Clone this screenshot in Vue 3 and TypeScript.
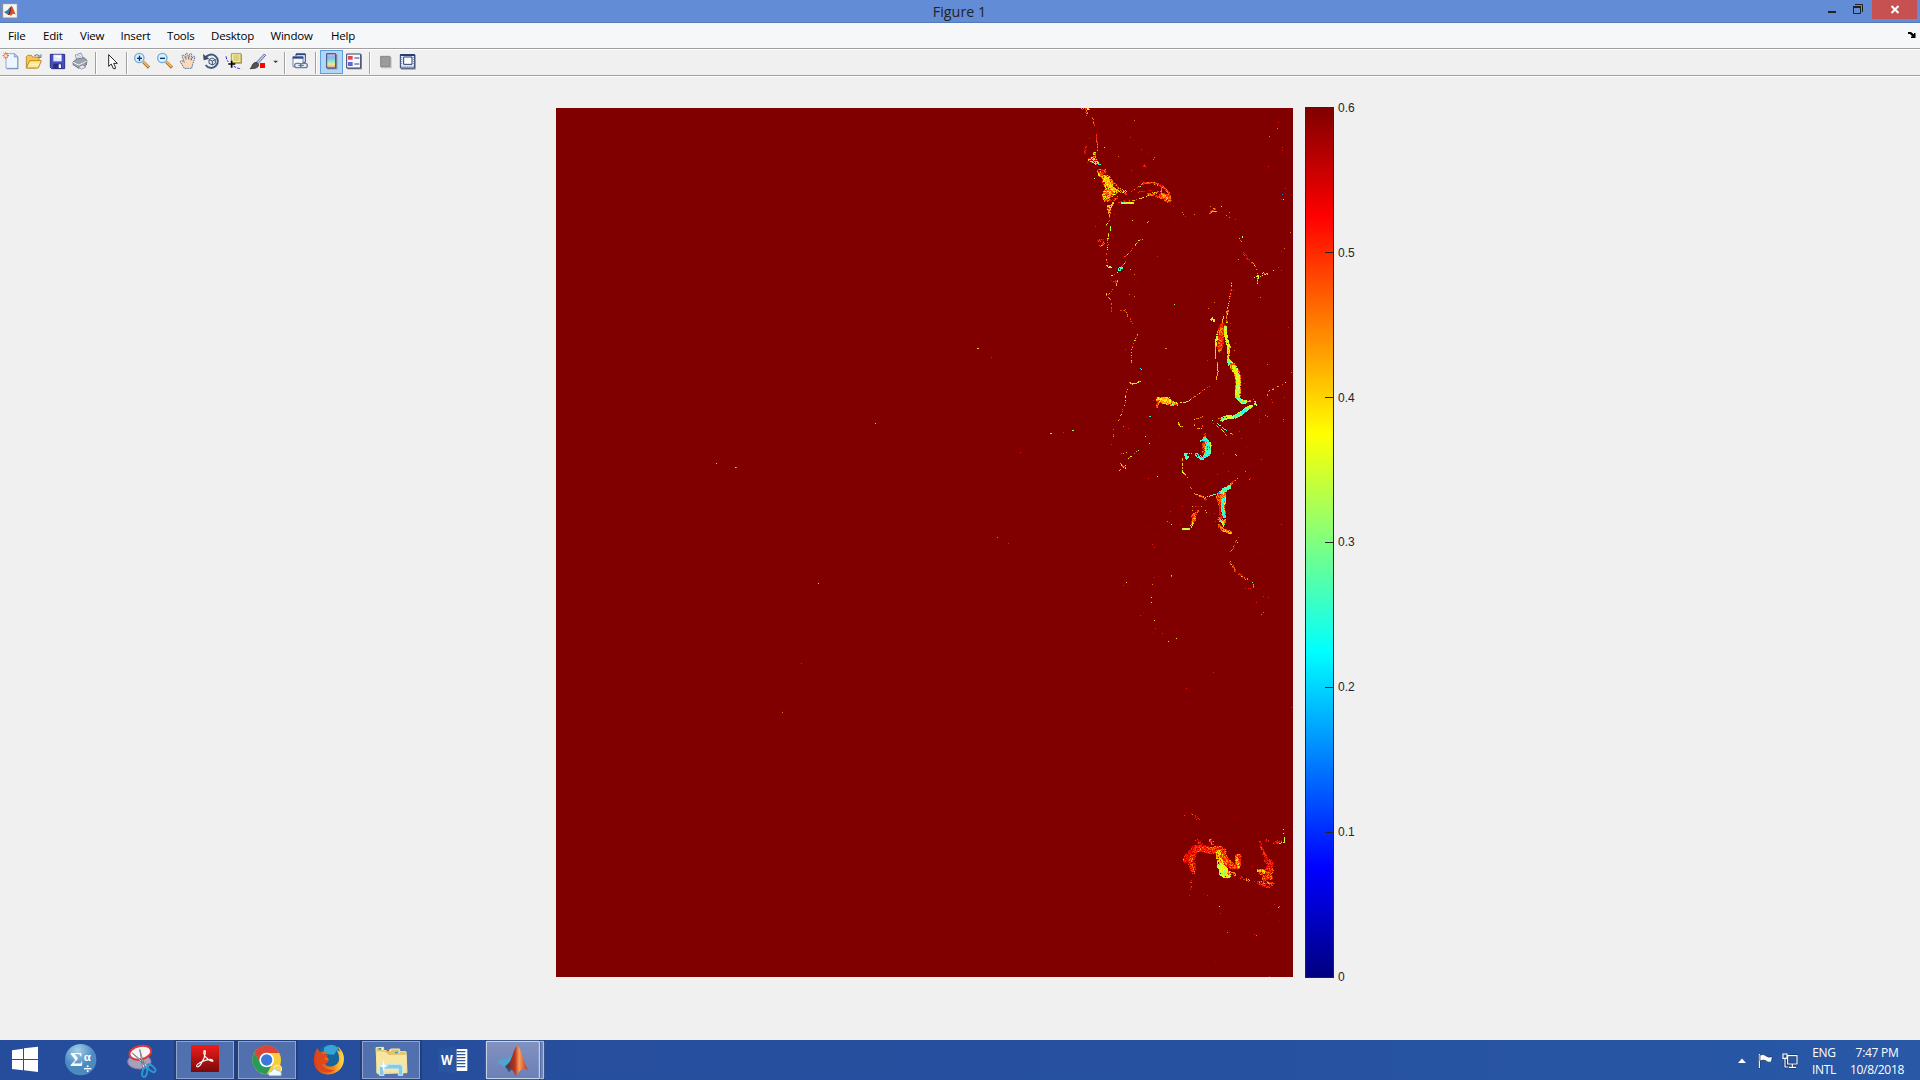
<script setup lang="ts">
type Palette = 'red' | 'orange' | 'mixed' | 'yellow' | 'lime' | 'jade' | 'aqua'
// palette, width in cells, fill density, then x/y pairs on a third-of-a-cell grid
type Stroke = [Palette, number, number, number[]]
interface Region { x: number; y: number; strokes: Stroke[]; specks: string }

const palettes: Record<Palette, string[]> = {
  red: ['#c80000', '#f01000', '#ff2000', '#ff3800', '#e00000'],
  orange: ['#ff3000', '#ff5000', '#ff7800', '#ff2000', '#e81000', '#ffa000'],
  mixed: ['#ff3000', '#ff9000', '#ffc000', '#f8ff08', '#ff6000', '#ff4800'],
  yellow: ['#ffc000', '#ffe000', '#ffa000', '#f0ff10', '#ffe800', '#ff8800'],
  lime: ['#c8ff38', '#d8ff28', '#98ff68', '#f0ff10', '#ffe000', '#b0ff50'],
  jade: ['#60ffa0', '#40ffc0', '#90ff70', '#50ffb0', '#30ffd0'],
  aqua: ['#20ffe0', '#00f0ff', '#40ffc0', '#60ffa0', '#10e8f8', '#50ffb0'],
}

const speckColors: Record<string, string> = {
  d: '#b80000', r: '#f01800', o: '#ff7000', y: '#ffe000', g: '#90ff70', c: '#10f0f0', b: '#0080ff',
}

const regions: Region[] = [
  {
    x: 1060, y: 100,
    strokes: [
      ['mixed', 2, 0.6, [64, 25, 84, 25]], ['aqua', 1, 0.7, [58, 25, 72, 25]], ['orange', 2, 0.6, [76, 30, 80, 42]],
      ['orange', 1, 0.45, [98, 52, 103, 76]], ['orange', 1, 0.85, [110, 104, 112, 150]],
      ['red', 2, 0.6, [78, 136, 72, 158]], ['mixed', 3, 0.7, [104, 160, 102, 176]],
      ['lime', 5, 0.6, [90, 178, 108, 186]], ['aqua', 1, 0.7, [98, 178, 108, 190, 120, 194]],
      ['orange', 5, 0.5, [118, 215, 134, 214]], ['mixed', 4, 0.8, [118, 222, 136, 234, 150, 250]],
      ['mixed', 9, 0.7, [138, 238, 150, 262, 142, 284]], ['yellow', 5, 0.9, [136, 236, 150, 258, 160, 270]],
      ['mixed', 8, 0.7, [136, 288, 160, 274]], ['orange', 2, 0.55, [152, 238, 176, 262, 196, 280]],
      ['yellow', 3, 0.65, [158, 268, 180, 275, 196, 274]], ['orange', 2, 0.6, [130, 302, 160, 298, 176, 288]],
      ['orange', 1, 0.75, [196, 276, 212, 276, 230, 266, 246, 250, 272, 246, 300, 253]],
      ['orange', 2, 0.9, [248, 249, 282, 248, 304, 256, 322, 273, 328, 290]],
      ['orange', 4, 0.85, [300, 286, 318, 286, 328, 302]], ['orange', 6, 0.9, [308, 287, 318, 291, 322, 298]], ['yellow', 3, 0.5, [308, 287, 318, 291, 322, 298]],
      ['orange', 2, 0.85, [262, 281, 288, 286, 304, 292]], ['mixed', 2, 0.65, [270, 276, 288, 276, 302, 272]],
      ['mixed', 1, 0.9, [304, 260, 304, 280]], ['red', 1, 0.7, [236, 276, 272, 270]],
      ['red', 2, 0.6, [174, 305, 210, 299]], ['lime', 2, 1, [184, 306, 216, 306]],
      ['jade', 1, 0.7, [187, 307, 206, 310]], ['mixed', 1, 0.55, [216, 303, 232, 298, 260, 288, 274, 284]],
      ['yellow', 2, 0.75, [158, 308, 146, 328]], ['mixed', 4, 0.7, [146, 320, 148, 336]],
      ['mixed', 1, 0.7, [150, 340, 149, 360, 138, 375]], ['lime', 1, 0.8, [152, 378, 152, 392]], ['yellow', 1, 0.8, [145, 400, 144, 416]],
      ['mixed', 1, 0.5, [142, 410, 144, 434, 138, 468, 142, 490]], ['lime', 2, 0.5, [138, 496, 152, 500]],
      ['red', 3, 0.45, [116, 422, 130, 420]], ['mixed', 2, 0.5, [118, 436, 130, 428]],
      ['mixed', 1, 0.8, [246, 418, 234, 421, 224, 440, 206, 460, 190, 472]],
      ['mixed', 1, 0.7, [200, 482, 180, 506, 168, 524, 154, 526]], ['jade', 3, 0.7, [179, 507, 183, 505]],
      ['aqua', 1, 0.9, [172, 542, 170, 556]], ['mixed', 1, 0.6, [172, 550, 154, 574, 142, 586, 150, 598]],
      ['red', 2, 0.3, [154, 538, 170, 544]], ['red', 2, 0.35, [248, 190, 258, 200]],
      ['orange', 2, 0.75, [448, 336, 462, 324]], ['yellow', 1, 1, [456, 333, 470, 334]],
      ['mixed', 1, 0.45, [530, 398, 545, 428]], ['red', 2, 0.6, [546, 455, 558, 470, 574, 486]],
      ['mixed', 1, 0.75, [576, 486, 586, 500, 592, 524, 594, 552]], ['lime', 3, 0.35, [586, 532, 600, 530]],
      ['mixed', 2, 0.4, [604, 522, 618, 520]], ['mixed', 1, 0.4, [514, 544, 514, 570, 508, 600]],
    ],
    specks: '223,61,o 88,115,r 132,142,y 82,186,r 103,235,g 102,241,d 211,112,r 220,121,d 244,148,r 264,157,d 279,178,o 283,172,o 249,198,r 255,200,r 295,216,d 215,211,r 202,73,d 175,169,o 655,67,r 652,85,o 628,110,o 667,143,r 667,151,r 625,199,r 676,265,r 668,283,b 664,298,r 670,298,g 691,397,o 673,445,o 664,454,r 535,478,c 547,410,g 547,413,y 292,469,r 211,508,c 223,523,o 232,544,d 217,361,y 265,364,o 262,367,y 343,364,d 367,337,o 370,344,o 376,349,r 404,344,o 450,320,o 483,320,y 500,346,o 508,337,o 508,352,o 526,359,r 550,486,d 523,514,d 610,517,g 640,511,y 655,503,r 664,510,r 601,592,y 209,583,o 222,590,r 391,580,d 114,349,d 121,358,d 106,379,r 164,344,r 340,320,r 332,312,d 242,260,g',
  },
  {
    x: 1060, y: 290,
    strokes: [
      ['mixed', 3, 0.35, [142, 14, 152, 12]], ['mixed', 1, 0.4, [156, 38, 153, 72]], ['orange', 2, 0.3, [174, 60, 192, 58, 214, 98]],
      ['mixed', 1, 0.5, [234, 130, 225, 150, 214, 178, 213, 222]], ['yellow', 1, 1, [208, 277, 216, 282, 230, 279, 240, 273]], ['lime', 1, 0.6, [210, 280, 226, 281, 238, 274]],
      ['mixed', 1, 0.5, [205, 292, 196, 314, 196, 338, 184, 370, 176, 392]], ['mixed', 1, 0.55, [162, 410, 160, 438]],
      ['mixed', 1, 0.35, [232, 483, 206, 506, 194, 530, 180, 542]], ['mixed', 1, 0.35, [180, 492, 204, 484]], ['mixed', 2, 0.4, [180, 520, 192, 532]],
      ['yellow', 1, 0.65, [508, 12, 507, 38, 501, 64]], ['mixed', 2, 0.65, [501, 62, 498, 96]],
      ['yellow', 1, 0.8, [492, 76, 486, 100, 474, 120, 468, 150, 466, 204]],
      ['red', 7, 0.8, [487, 108, 482, 140, 479, 170]], ['orange', 4, 0.8, [484, 114, 479, 150, 479, 180]],
      ['lime', 3, 0.95, [495, 112, 498, 140, 504, 166, 506, 188]], ['yellow', 2, 0.8, [507, 170, 506, 186, 501, 204]],
      ['lime', 2, 0.7, [470, 132, 466, 164]], ['yellow', 1, 0.95, [472, 218, 474, 245, 468, 268]],
      ['mixed', 1, 0.65, [460, 282, 430, 300, 406, 318, 382, 335]], ['lime', 1, 0.6, [382, 335, 356, 340]],
      ['yellow', 6, 0.85, [296, 329, 322, 329]], ['yellow', 7, 1, [310, 330, 322, 333]], ['yellow', 3, 0.85, [320, 332, 346, 340]], ['mixed', 3, 0.8, [320, 338, 350, 342]],
      ['aqua', 2, 0.5, [332, 344, 349, 340]], ['orange', 2, 0.7, [294, 332, 288, 350]],
      ['lime', 4, 1, [506, 212, 516, 226, 524, 235]], ['jade', 3, 0.8, [505, 214, 509, 222]],
      ['mixed', 6, 0.9, [517, 226, 530, 246, 533, 270, 532, 316]], ['lime', 4, 1, [520, 230, 531, 256, 532, 290, 530, 320]],
      ['lime', 4, 1, [529, 316, 540, 332, 556, 335]], ['jade', 3, 0.6, [530, 320, 541, 330, 552, 334]], ['lime', 1, 0.8, [552, 334, 570, 334]],
      ['mixed', 1, 0.7, [562, 334, 580, 328]], ['lime', 2, 0.7, [584, 334, 585, 344]], ['lime', 1, 0.9, [584, 344, 570, 347]],
      ['lime', 4, 0.95, [572, 348, 548, 366, 526, 378, 502, 380, 486, 387]], ['jade', 4, 0.9, [562, 354, 544, 370, 526, 378]], ['aqua', 2, 0.5, [554, 360, 530, 376]],
      ['jade', 3, 0.8, [484, 387, 494, 386]], ['mixed', 1, 0.7, [472, 386, 484, 384]],
      ['jade', 1, 0.75, [472, 400, 486, 413, 498, 421]], ['mixed', 1, 0.6, [460, 400, 478, 414, 492, 426, 500, 440]],
      ['mixed', 1, 0.55, [428, 402, 425, 415, 410, 414, 402, 403]], ['mixed', 1, 0.5, [404, 388, 426, 380]],
      ['mixed', 2, 0.35, [354, 398, 364, 410]], ['orange', 2, 0.5, [433, 428, 434, 442]],
      ['aqua', 4, 0.95, [432, 444, 442, 457]], ['orange', 5, 0.75, [434, 460, 444, 480]], ['aqua', 2, 0.9, [420, 452, 434, 446]],
      ['aqua', 6, 0.95, [444, 466, 441, 490]], ['orange', 3, 0.7, [432, 462, 430, 486]], ['lime', 1, 0.9, [451, 458, 452, 490]],
      ['aqua', 4, 0.95, [444, 486, 434, 500]], ['aqua', 3, 0.9, [426, 506, 410, 494]], ['lime', 1, 0.6, [374, 490, 406, 492]],
      ['jade', 4, 0.8, [377, 493, 380, 502]], ['yellow', 1, 0.6, [368, 506, 367, 542, 382, 562]], ['lime', 3, 0.5, [454, 86, 460, 90]],
      ['mixed', 1, 0.35, [620, 318, 628, 302, 650, 292, 678, 276]], ['red', 1, 0.5, [634, 320, 638, 342]],
      ['orange', 2, 0.6, [500, 590, 518, 574]], ['jade', 3, 1, [490, 598, 508, 592]],
      ['mixed', 1, 0.4, [510, 430, 524, 432]],
    ],
    specks: '343,43,g 391,10,d 208,13,o 222,19,o 601,22,o 462,37,o 445,55,o 511,2,r 520,2,r 684,112,r 643,133,d 511,101,r 511,121,d 525,161,r 523,180,o 316,175,o 319,175,o 196,178,r 242,236,c 244,239,g 241,257,d 442,211,r 328,268,r 622,223,o 694,247,o 553,280,r 280,331,r 268,379,c 271,379,c 37,421,g 40,421,g 10,427,y 205,415,r 190,410,o 154,463,r 256,439,g 268,460,g 292,559,y 265,565,r 298,439,d 234,481,g 545,445,r 558,471,d 490,490,r 528,496,y 526,494,g 604,508,r 556,544,r 568,569,r 571,566,r 452,577,d 392,593,r 672,322,r 617,376,o 622,379,o 598,388,r 598,398,r 670,388,o 670,394,r 457,391,g 518,433,o 538,425,r',
  },
  {
    x: 1100, y: 470,
    strokes: [
      ['lime', 2, 0.65, [244, 2, 250, 8]], ['mixed', 1, 0.65, [254, 12, 264, 24]], ['orange', 1, 0.7, [270, 52, 275, 56]],
      ['orange', 2, 0.65, [282, 71, 302, 76, 316, 84]], ['yellow', 1, 0.5, [290, 74, 310, 80]], ['lime', 1, 0.8, [316, 82, 334, 76, 354, 72]], ['jade', 3, 0.95, [360, 68, 375, 60, 389, 50]],
      ['aqua', 1, 0.9, [342, 74, 364, 69]], ['orange', 1, 0.65, [385, 48, 397, 36, 411, 26]],
      ['orange', 5, 0.8, [356, 80, 362, 100]], ['yellow', 3, 0.8, [374, 70, 366, 84]], ['mixed', 6, 0.75, [368, 80, 368, 100]],
      ['aqua', 3, 1, [369, 88, 367, 114, 372, 140]], ['mixed', 1, 0.8, [376, 70, 374, 112, 377, 140]], ['red', 2, 0.75, [358, 98, 358, 126, 366, 144]],
      ['mixed', 3, 0.8, [357, 146, 370, 156, 374, 150]], ['jade', 2, 0.9, [358, 150, 370, 160]], ['lime', 1, 1, [367, 158, 370, 170]],
      ['orange', 3, 0.85, [357, 165, 370, 180, 390, 188]], ['yellow', 2, 0.95, [370, 181, 380, 184, 392, 188]],
      ['orange', 2, 0.8, [292, 120, 280, 132, 274, 136]], ['orange', 4, 0.75, [282, 134, 278, 156]], ['yellow', 2, 0.5, [284, 136, 278, 156]], ['yellow', 2, 0.8, [276, 160, 268, 172]],
      ['lime', 2, 1, [248, 174, 266, 174]], ['orange', 1, 0.7, [272, 126, 278, 120]], ['orange', 1, 0.4, [274, 108, 308, 108]],
      ['orange', 1, 0.65, [410, 210, 399, 235, 386, 250]], ['orange', 2, 0.55, [388, 274, 398, 290, 404, 302]], ['yellow', 1, 0.3, [390, 274, 398, 292]],
      ['orange', 2, 0.5, [414, 311, 426, 318, 438, 326]], ['yellow', 1, 0.65, [422, 319, 432, 322]],
      ['orange', 1, 0.45, [458, 338, 462, 354, 458, 374]], ['red', 2, 0.3, [312, 86, 322, 98]],
    ],
    specks: '58,2,y 145,25,r 172,19,g 332,37,d 352,13,r 385,4,r 436,4,o 448,28,o 451,25,r 248,109,r 316,122,y 319,127,y 343,130,r 205,130,d 210,124,r 202,154,o 207,157,r 214,162,g 241,163,r 163,195,d 148,172,d 439,160,d 544,163,r 508,205,d 484,247,d 158,223,r 163,232,r 175,320,d 163,322,r 157,343,o 214,316,y 214,319,o 79,337,y 70,346,r 122,348,d 154,382,y 154,397,y 130,427,d 121,436,r 163,451,y 166,475,r 187,475,d 187,490,r 160,487,d 229,481,d 229,505,y 205,514,y 436,355,r 445,355,r 451,355,r 458,337,g 490,379,r 505,382,r 469,397,r 490,427,o 484,433,o 415,202,r 389,262,d 346,154,r 352,148,r 412,217,y 355,68,b 358,67,b 355,71,b',
  },
  {
    x: 1160, y: 800,
    strokes: [
      ['red', 5, 0.75, [76, 180, 82, 166, 98, 152]], ['red', 7, 0.85, [102, 144, 124, 144, 150, 152]], ['orange', 5, 0.55, [108, 148, 130, 148, 150, 152, 174, 154]],
      ['red', 7, 0.75, [100, 156, 95, 178, 97, 204]], ['orange', 3, 0.4, [94, 160, 92, 194, 101, 218]],
      ['orange', 6, 0.75, [158, 148, 178, 146, 190, 154]], ['orange', 7, 0.8, [178, 158, 190, 178, 194, 196]],
      ['yellow', 7, 0.85, [178, 160, 182, 185, 184, 205]], ['orange', 6, 0.85, [190, 164, 202, 186, 216, 200]],
      ['lime', 7, 0.9, [182, 200, 192, 208, 194, 218]], ['lime', 8, 0.85, [186, 218, 202, 222]],
      ['orange', 4, 0.6, [204, 218, 222, 222]], ['orange', 6, 0.85, [234, 170, 232, 200]], ['yellow', 2, 0.6, [230, 172, 232, 198]],
      ['orange', 2, 0.6, [240, 230, 266, 240]], ['lime', 1, 0.4, [262, 236, 268, 240]], ['red', 1, 0.3, [272, 240, 298, 252]],
      ['red', 2, 0.8, [299, 124, 304, 144, 318, 172]], ['red', 3, 0.5, [302, 140, 316, 168]], ['red', 5, 0.75, [320, 182, 334, 190, 324, 204]],
      ['orange', 6, 0.65, [302, 213, 322, 219, 332, 210]], ['yellow', 3, 0.4, [296, 210, 312, 216]], ['orange', 5, 0.7, [312, 234, 332, 232]],
      ['red', 4, 0.65, [296, 246, 336, 250]], ['orange', 2, 0.6, [294, 244, 330, 250]], ['red', 2, 0.65, [308, 256, 332, 261]],
      ['red', 3, 0.55, [344, 128, 360, 124]], ['lime', 1, 0.85, [358, 130, 372, 126, 374, 112]], ['lime', 1, 0.4, [371, 88, 370, 110]],
      ['red', 2, 0.4, [314, 118, 324, 122]], ['red', 2, 0.25, [72, 52, 80, 36]], ['red', 3, 0.25, [110, 48, 116, 62]],
      ['red', 2, 0.25, [92, 240, 88, 282]], ['orange', 3, 0.5, [150, 118, 158, 130]], ['red', 3, 0.4, [110, 122, 124, 130]],
    ],
    specks: '94,41,r 97,43,o 223,49,d 385,79,d 71,178,g 259,184,d 277,199,r 142,286,r 130,283,d 148,295,d 178,319,g 181,340,r 202,397,o 283,404,r 289,406,o 343,313,r 355,322,y 358,319,o 322,337,d 358,361,d 376,391,d 328,529,r 167,484,d 334,320,d',
  },
  {
    x: 0, y: 0, strokes: [],
    specks: '2931,1044,g 2934,1044,y 2973,1071,r 2625,1269,g 2148,1389,g 2208,1401,o 2205,1401,y 3153,1299,g 3150,1299,g 3189,1296,r 3219,1290,g 3060,1356,r 2991,1611,o 3024,1629,r 2454,1749,y 2403,1989,r 2346,2136,o 3639,2016,r 3558,2064,r 3873,2121,r',
  },
]

function makeRandom(seed: number): () => number {
  let s = seed
  return () => {
    s = (s * 1664525 + 1013904223) >>> 0
    return s / 4294967296
  }
}

function rasterise(): { color: string; d: string }[] {
  const cells = new Map<string, string>()
  const random = makeRandom(4127)
  for (const region of regions) {
    for (const [name, width, density, pts] of region.strokes) {
      const visited = new Set<string>()
      const colors = palettes[name]
      for (let i = 0; i + 3 < pts.length; i += 2) {
        const x0 = pts[i] / 3, y0 = pts[i + 1] / 3
        const dx = pts[i + 2] / 3 - x0, dy = pts[i + 3] / 3 - y0
        const steps = Math.max(1, Math.ceil(Math.max(Math.abs(dx), Math.abs(dy))))
        for (let k = 0; k <= steps; k++) {
          const cx = x0 + (dx * k) / steps, cy = y0 + (dy * k) / steps
          const lo = -Math.floor((width - 1) / 2), hi = Math.floor(width / 2)
          for (let a = lo; a <= hi; a++) {
            for (let b = lo; b <= hi; b++) {
              if (width > 3 && a * a + b * b > (width * width) / 4 + 0.5) continue
              const key = `${region.x + Math.floor(cx) + a},${region.y + Math.floor(cy) + b}`
              if (visited.has(key)) continue
              visited.add(key)
              if (random() < density) cells.set(key, colors[Math.floor(random() * colors.length)])
              else if (width > 4 && !cells.has(key) && random() < 0.6) cells.set(key, '#d80800')
            }
          }
        }
      }
    }
    for (const speck of region.specks.split(' ')) {
      const [x, y, c] = speck.split(',')
      cells.set(`${region.x + Math.floor(+x / 3)},${region.y + Math.floor(+y / 3)}`, speckColors[c])
    }
  }
  const byColor = new Map<string, string>()
  cells.forEach((color, key) => {
    byColor.set(color, (byColor.get(color) ?? '') + `M${key.replace(',', ' ')}h1v1h-1z`)
  })
  return Array.from(byColor, ([color, d]) => ({ color, d }))
}

const layers = rasterise()
const menus = [
  { label: 'File', width: 35 }, { label: 'Edit', width: 37 }, { label: 'View', width: 40.5 }, { label: 'Insert', width: 46.5 },
  { label: 'Tools', width: 44 }, { label: 'Desktop', width: 59.500 }, { label: 'Window', width: 60.500 }, { label: 'Help', width: 40 },
]
const ticks = ['0.6', '0.5', '0.4', '0.3', '0.2', '0.1', '0']
</script>

<template>
  <div class="screen">
    <header class="titlebar">
      <svg class="app-icon" viewBox="0 0 48 48">
        <path d="M2 2h44v43H2z" fill="#f5f5f5" stroke="#8d8d8d" stroke-width="3" />
        <path d="M6 27l10-5 9-11-3 20-7 3z" fill="#397aa5" />
        <path d="M16 35c7-2 8-26 12-26 5 0 8 17 14 26-7-5-10-3-15 4-3-5-6-4-11-4z" fill="#d35425" />
        <path d="M16 35c7-2 8-26 11-24 0 8-1 19-5 24z" fill="#6b1f24" />
      </svg>
      <span class="title">Figure 1</span>
      <div class="controls">
        <svg class="min" viewBox="0 0 26 20"><path d="M10 11h8v2h-8z" fill="#222" /></svg>
        <svg class="max" viewBox="0 0 28 20"><path d="M9.500 7h7v6.500h-7zM11 4.500h7.500V12" fill="none" stroke="#222" /><path d="M9 6h8v2H9z" fill="#222" /></svg>
        <svg class="close" viewBox="0 0 45 19"><path d="M19.500 6l7 7m0-7l-7 7" stroke="#fff" stroke-width="2" /></svg>
      </div>
    </header>

    <nav class="menubar">
      <span v-for="m in menus" :key="m.label" :style="{ width: m.width + 'px' }">{{ m.label }}</span>
      <svg class="dock" viewBox="0 0 8 6"><path d="M0 0h3l3 2.500V1h1.500v5H3V4.500h1.500L2 2H0z" fill="#000" /></svg>
    </nav>

    <div class="toolbar">
      <svg class="tool" viewBox="0 150 69 72">
        <path d="M21 163h26l8 8v37H21z" fill="#7792b5" /><path d="M18 161h26l9 9v35H18z" fill="#edf5ff" stroke="#6587b7" stroke-width="2" />
        <path d="M43 161v10h10" fill="#b9cfeb" stroke="#6587b7" stroke-width="2" />
        <path d="M17 157v19M8 167h19M11 160l13 13M24 160l-13 13" stroke="#e05425" stroke-width="3" /><circle cx="17" cy="167" r="4" fill="#fff1a4" />
      </svg>
      <svg class="tool" viewBox="0 150 69 72">
        <path d="M10 204v-34l4-4h11l4 5h19v8l-7 25z" fill="#f4c84d" stroke="#a86b12" stroke-width="2" />
        <path d="M10 204l10-22h35l-9 22z" fill="#ffe98b" stroke="#c28822" stroke-width="3" /><path d="M18 193h30" stroke="#fff5c1" stroke-width="4" />
        <path d="M34 167q9-7 17 2m3-6v9h-9" fill="none" stroke="#55749c" stroke-width="3" />
      </svg>
      <svg class="tool" viewBox="0 150 69 72">
        <path d="M13 163h43v43H17l-4-4z" fill="#474fc0" stroke="#26318d" stroke-width="3" /><path d="M22 164h25v20H22z" fill="#dfeafa" />
        <path d="M24 167h20v9z" fill="#fff" /><path d="M22 191h25v15H22z" fill="#272d7c" /><path d="M38 193h7v11h-7z" fill="#f4f4fa" />
      </svg>
      <svg class="tool" viewBox="0 150 69 72">
        <path d="M24 183l-5-18 17-6 8 18z" fill="#f5faff" stroke="#68727e" stroke-width="2" /><path d="M23 168l12-4m-10 9l12-4" stroke="#7ba0d1" stroke-width="2" />
        <path d="M12 186l11-9 22-4 9 8-2 14-23 10-17-11z" fill="#9da2ac" stroke="#50555f" stroke-width="2" /><path d="M12 187l17 8 24-11" fill="none" stroke="#f3f3f3" stroke-width="3" />
        <path d="M27 201l14-6 10 6-13 6z" fill="#e9ebef" stroke="#6f747d" stroke-width="2" /><circle cx="49" cy="189" r="2" fill="#54a450" />
      </svg>
      <i class="sep"></i>
      <svg class="tool" viewBox="0 150 69 72"><path d="M26 164v35l8-7 6 14h6v-5l-5-11h11z" fill="#fff" stroke="#000" stroke-width="2.500" /></svg>
      <i class="sep"></i>
      <svg v-for="sign in ['plus', 'minus']" :key="sign" class="tool" viewBox="0 150 69 72">
        <path d="M37 186l17 17" stroke="#8b632f" stroke-width="9" /><path d="M37 185l16 16" stroke="#f4b348" stroke-width="6" />
        <circle cx="25" cy="174" r="14" fill="#d5f3fc" stroke="#77a9cf" stroke-width="4" />
        <path d="M18 175h15" stroke="#142d7b" stroke-width="4" /><path v-if="sign === 'plus'" d="M25.500 167v16" stroke="#142d7b" stroke-width="4" />
      </svg>
      <svg class="tool" viewBox="0 150 69 72">
        <path d="M22 205l-12-19q0-5 5-4l7 5-7-19q1-5 6-2l6 12-1-16q3-5 6 0l3 16 3-16q4-4 6 1l-2 18 6-12q5-2 6 2l-7 22-3 12z" fill="#ffdab8" stroke="#375d9c" stroke-width="2.500" stroke-dasharray="5 2" />
      </svg>
      <svg class="tool" viewBox="0 150 69 72">
        <path d="M16 174a20 20 0 1 1 1 21" fill="none" stroke="#435a80" stroke-width="6" /><path d="M9 162l2 19 17-5z" fill="#34496c" />
        <path d="M27 179l9-5 10 5v11l-9 5-10-5zM27 179l10 4 9-4M37 183v12" fill="#e9effa" stroke="#405371" stroke-width="3" />
      </svg>
      <svg class="tool" viewBox="0 150 69 72">
        <path d="M27 163h30v28H27z" fill="#9a9a78" /><path d="M25 161h29v27H25z" fill="#f7ee98" stroke="#a49945" stroke-width="3" /><path d="M31 168h18m-18 6h18m-18 6h18" stroke="#a39a4d" stroke-width="2" />
        <path d="M9 169q2 11 7 17m16 12q10 8 23 8" fill="none" stroke="#1821eb" stroke-width="3" stroke-dasharray="8 4" /><path d="M26 182v21M16 192h21" stroke="#000" stroke-width="5" />
      </svg>
      <svg class="tool" viewBox="0 150 69 72">
        <path d="M30 188l25-26 4 4-25 27z" fill="#cbd7ff" stroke="#55609a" stroke-width="3" /><path d="M12 206q6-4 7-12 5-9 15-6l4 7q-1 12-26 11z" fill="#555" stroke="#222" stroke-width="2" /><path d="M42 189h15v15H42z" fill="red" />
      </svg>
      <svg class="caret" viewBox="0 150 36 72"><path d="M13 182h14l-7 7z" fill="#333" /></svg>
      <i class="sep"></i>
      <svg class="tool" viewBox="0 150 69 72">
        <path d="M21 162h28v25H21z" fill="#eef2fa" stroke="#2d4882" stroke-width="3" /><path d="M21 163h28" stroke="#2d4882" stroke-width="5" />
        <path d="M12 170h30v30H12z" fill="#f5f7fb" stroke="#6f84ad" stroke-width="3" /><path d="M11 173h32" stroke="#2d4882" stroke-width="6" />
        <g fill="#e7ecf5" stroke="#6c7e9f" stroke-width="4"><rect x="17" y="190" width="20" height="13" rx="6" /><rect x="35" y="190" width="20" height="13" rx="6" /></g><path d="M28 196h17" stroke="#52678f" stroke-width="3" />
      </svg>
      <i class="sep"></i>
      <svg class="tool selected" viewBox="0 150 69 72">
        <defs><linearGradient id="tool-map" x2="0" y2="1"><stop stop-color="#ccb0e0" /><stop offset=".3" stop-color="#8bb7f0" /><stop offset=".52" stop-color="#82eac9" /><stop offset=".74" stop-color="#f4e990" /><stop offset="1" stop-color="#ee9794" /></linearGradient></defs>
        <path d="M22 163h30v45H22z" fill="#82909f" /><path d="M20 161h27v43H20z" fill="url(#tool-map)" stroke="#314e88" stroke-width="3" />
      </svg>
      <svg class="tool" viewBox="0 150 69 72">
        <path d="M13 164h44v44H13z" fill="#8b8b8b" /><path d="M11 162h42v42H11z" fill="#f8f9ff" stroke="#314273" stroke-width="3" /><path d="M15 168h14v11H15z" fill="#e24848" /><path d="M15 186h14v12H15z" fill="#6464da" /><path d="M34 174h15m-15 18h15" stroke="#35406a" stroke-width="3" />
      </svg>
      <i class="sep"></i>
      <svg class="tool" viewBox="0 150 69 72"><path d="M21 171h32v34H21z" fill="#c7c7c7" /><path d="M20 169h28v31H20z" fill="#9b9b9b" stroke="#858585" stroke-width="3" /></svg>
      <svg class="tool" viewBox="0 150 69 72">
        <path d="M12 165h44v44H12z" fill="#969696" /><path d="M10 164h43v40H10z" fill="#e7edfa" stroke="#293d70" stroke-width="3" /><path d="M10 165h43" stroke="#293d70" stroke-width="6" /><path d="M20 171h25v22H20z" fill="#fff" stroke="#293d70" stroke-width="3" /><path d="M13 199h38M14 171v25m36-25v25" stroke="#7f8fad" stroke-width="3" stroke-dasharray="3 3" />
      </svg>
    </div>

    <main class="figure">
      <svg class="heatmap" viewBox="556 108 737 869" shape-rendering="crispEdges">
        <path v-for="l in layers" :key="l.color" :d="l.d" :fill="l.color" />
      </svg>
      <div class="colorbar"><i v-for="t in 5" :key="t"></i></div>
      <div class="labels"><span v-for="t in ticks" :key="t">{{ t }}</span></div>
    </main>

    <footer class="taskbar">
      <svg class="start" viewBox="0 12 150 120"><path d="M36 43l33-5v31H36zM72 37l42-5v37H72zM36 72h33v31l-33-4zM72 72h42v36l-42-5z" fill="#fff" /></svg>
      <svg class="task" viewBox="0 12 186 120">
        <defs><radialGradient id="sigma" cx=".4" cy=".2"><stop stop-color="#a6cee8" /><stop offset="1" stop-color="#4b8bc0" /></radialGradient></defs>
        <circle cx="92" cy="71" r="47" fill="url(#sigma)" /><text x="60" y="91" font-family="Liberation Serif, serif" font-weight="bold" font-size="59" fill="#fff">Σ</text><text x="101" y="76" font-family="Liberation Serif, serif" font-weight="bold" font-size="38" fill="#fff">α</text><path d="M102 98h22" stroke="#fff" stroke-width="4" /><circle cx="113" cy="91" r="3" fill="#fff" /><circle cx="113" cy="105" r="3" fill="#fff" />
      </svg>
      <svg class="task" viewBox="0 12 186 120">
        <ellipse cx="82" cy="77" rx="35" ry="22" fill="#a4a1bf" stroke="#8b7ca9" stroke-width="3" /><ellipse cx="85" cy="50" rx="33" ry="20" transform="rotate(-13 85 50)" fill="#f7f4f5" stroke="#dd353c" stroke-width="6" />
        <path d="M61 51l45 46 5-5zM83 40l16 53-7 2z" fill="#d9e0e7" stroke="#5a5f69" stroke-width="2" /><g fill="none" stroke="#2998d6" stroke-width="6"><ellipse cx="98" cy="109" rx="7" ry="14" transform="rotate(13 98 109)" /><ellipse cx="118" cy="97" rx="15" ry="7" transform="rotate(42 118 97)" /></g>
      </svg>
      <svg class="task open" viewBox="0 12 186 120">
        <defs><linearGradient id="acro" x2="0" y2="1"><stop stop-color="#f21b18" /><stop offset="1" stop-color="#790a0c" /></linearGradient></defs>
        <path d="M51 27h84v81H51z" fill="url(#acro)" /><path d="M68 91c-5-8 40-27 48-18 7 10-32-8-26-28 7-7 5 17-8 37-5 8-10 13-14 9z" fill="none" stroke="#fff" stroke-width="3.500" />
      </svg>
      <svg class="task open" viewBox="0 12 186 120">
        <circle cx="92" cy="72" r="43" fill="#f7cd3a" /><path d="M55 50a43 43 0 0 1 75 1H92a22 22 0 0 0-20 29z" fill="#db4538" /><path d="M55 50a43 43 0 0 0 37 65l17-32a22 22 0 0 1-35-2z" fill="#279b57" /><circle cx="92" cy="72" r="22" fill="#fff" /><circle cx="92" cy="72" r="17" fill="#3b78dc" />
        <circle cx="125" cy="99" r="12" fill="#ffd34f" stroke="#fff4bf" stroke-width="3" /><path d="M100 119q-7-10 7-13 7-15 17-2 15-1 11 15z" fill="#eefafe" stroke="#91b8cb" stroke-width="2" />
      </svg>
      <svg class="task" viewBox="0 12 186 120">
        <defs><linearGradient id="fox" x2="1" y2="0"><stop stop-color="#d73c16" /><stop offset=".65" stop-color="#f3861c" /><stop offset="1" stop-color="#ffe348" /></linearGradient></defs>
        <circle cx="96" cy="68" r="42" fill="#1765a0" /><path d="M78 35q22-18 43 1l-13 20-30-3z" fill="#33a5d6" /><path d="M51 48l7-12 8 14q10-8 22-4l-8 14q9 5 13 10-3 6-14 10 8 17 29 9 20-8 14-33l-6-15 11 6-9-16c18 13 23 34 18 51-9 34-54 45-77 21C43 87 47 66 51 48z" fill="url(#fox)" /><path d="M57 50l22 5q9 0 12 5l-15 9 17 5q-8 12-23 11 16 21 42 16-28 18-48-2C46 82 54 64 57 50z" fill="#df481c" />
      </svg>
      <svg class="task open" viewBox="0 12 186 120">
        <path d="M48 35l23-1v10h19l2-5h27v8h19l3 63-89 3z" fill="#dfc568" stroke="#f5e9a9" stroke-width="3" /><path d="M51 46l25 1 10 10 53-1v54H49z" fill="#f7e6a0" /><path d="M57 36h12v5H57zM81 41h12v5H81zM105 47h13v5h-13z" fill="#fff" /><path d="M56 36h8v5h-8z" fill="#24a65a" /><path d="M80 41h8v5h-8z" fill="#d64132" /><path d="M105 47h10v5h-10z" fill="#3494d2" />
        <path d="M58 118V95q0-10 10-10h50q10 0 10 10v23h-13V99H72v19z" fill="#88c9e6" stroke="#cbecf6" stroke-width="3" /><path d="M71 72l3 15 13 3-13 3-3 14-3-14-13-3 13-3z" fill="#fff" />
      </svg>
      <svg class="task" viewBox="0 12 186 120">
        <path d="M98 39h38v66H98z" fill="#fff" /><path d="M104 47h26m-26 9h26m-26 9h26m-26 9h26m-26 9h26m-26 9h26" stroke="#2b579a" stroke-width="4" /><path d="M48 39l56-10v86l-56-9z" fill="#28559d" /><text x="57" y="87" textLength="35" font-family="Open Sans, sans-serif" font-size="40" font-weight="bold" fill="#fff" lengthAdjust="spacingAndGlyphs">W</text>
      </svg>
      <svg class="task" viewBox="0 12 186 120">
        <defs><linearGradient id="active" x2="0" y2="1"><stop stop-color="#8292c0" /><stop offset="1" stop-color="#6b80b8" /></linearGradient><linearGradient id="peak"><stop stop-color="#56272b" /><stop offset=".42" stop-color="#b83522" /><stop offset=".6" stop-color="#f9a05b" /><stop offset="1" stop-color="#bb2718" /></linearGradient></defs>
        <path d="M3 12h180v120H3z" fill="#203e7c" /><path d="M7 16h159v112H7z" fill="url(#active)" stroke="#e1e6f2" stroke-width="3" /><path d="M169 16h10v112h-10" fill="#7186ba" stroke="#c4cfe5" stroke-width="3" />
        <path d="M38 77l21-11 11 2 31-35-18 59-19 2z" fill="#53a3ce" /><path d="M63 91l21-19 17-40-12 61-14 16z" fill="#30547b" /><path d="M64 94c18-5 25-64 36-64 11 1 19 53 33 73-16-12-25 1-38 18-4-13-8-23-31-27z" fill="url(#peak)" />
      </svg>
      <div class="tray">
        <svg class="up" viewBox="0 0 8 5"><path d="M0 5l4-4.500L8 5z" fill="#fff" /></svg>
        <svg class="flag" viewBox="0 0 48 48"><path d="M4 4v42" stroke="#0d2854" stroke-width="6" /><path d="M4 3v42" stroke="#fff" stroke-width="3.500" /><path d="M6 6q11-4 17 2 7 7 20 3l-3 16q-11 3-17-4-6-4-17 1z" fill="#fff" stroke="#152e5c" stroke-width="2" /></svg>
        <svg class="net" viewBox="0 0 48 48"><path d="M17 8h28v25H17zM31 33v8M21 43h21M9 15v27h10" fill="none" stroke="#102a57" stroke-width="7" /><path d="M17 8h28v25H17zM31 33v8M21 43h21M9 15v27h10" fill="none" stroke="#fff" stroke-width="3.500" /><path d="M3 3h12v13H3z" fill="#274b86" stroke="#fff" stroke-width="3.500" /></svg>
        <div class="stack lang"><span>ENG</span><span>INTL</span></div>
        <div class="stack clock"><span>7:47 PM</span><span>10/8/2018</span></div>
      </div>
    </footer>
  </div>
</template>

<style>
body { margin: 0; overflow: hidden; }
</style>

<style scoped>
.screen { width: 1920px; height: 1080px; display: flex; flex-direction: column; background: #f0f0f0; font-family: "Open Sans", "Noto Sans", sans-serif; color: #000; overflow: hidden; }
.screen svg { display: block; flex: none; }
.titlebar { box-sizing: border-box; height: 23px; flex: none; display: flex; background: #628cd6; border-bottom: 1px solid #5479b8; }
.app-icon { width: 16px; height: 16px; margin: 3px 0 0 2px; }
.title { flex: 1; padding-left: 83px; text-align: center; font-size: 14.300px; line-height: 23px; color: #222; }
.controls { display: flex; }
.min { width: 26px; height: 20px; }
.max { width: 28px; height: 20px; }
.close { width: 45px; height: 19px; background: #c75050; margin-right: 3px; }
.menubar { box-sizing: border-box; height: 26px; flex: none; display: flex; padding-left: 8px; background: #f5f7f9; border-bottom: 1px solid #a0a0a0; font-size: 11.500px; line-height: 25px; letter-spacing: -0.2px; white-space: nowrap; }
.dock { width: 8px; height: 6px; margin: 9px 4px 0 auto; }
.toolbar { box-sizing: border-box; height: 27px; flex: none; display: flex; border-top: 1px solid #fff; border-bottom: 1px solid #a0a0a0; }
.tool { width: 23px; height: 24px; }
.selected { box-sizing: border-box; background: #b5d5f4; box-shadow: inset 0 0 0 1px #5da2df; }
.caret { width: 12px; height: 24px; }
.sep { box-sizing: border-box; width: 8px; height: 22px; margin-top: 2px; background: linear-gradient(to right, transparent 3px, #a0a0a0 3px, #a0a0a0 4px, #fff 4px, #fff 5px, transparent 5px); }
.figure { flex: 1; display: flex; align-items: flex-start; padding: 31px 0 0 556px; border-top: 1px solid #fff; }
.heatmap { width: 737px; height: 869px; background: #800000; }
.colorbar { box-sizing: border-box; width: 29px; height: 871px; margin: -1px 0 0 12px; border: 1px solid #262626; background: linear-gradient(#800000, #f00 12.500%, #ff0 37.500%, #0ff 62.500%, #00f 87.500%, #000080); display: flex; flex-direction: column; justify-content: space-between; align-items: flex-end; padding: 144px 0; }
.colorbar i { width: 8px; height: 1px; background: #262626; }
.labels { display: flex; flex-direction: column; justify-content: space-between; height: 883px; margin: -7px 0 0 4px; font-family: "Liberation Sans", Arial, sans-serif; font-size: 12px; line-height: 14px; color: #262626; }
.taskbar { height: 40px; flex: none; display: flex; background: linear-gradient(to right, #264d9b, #2650a0 60%, #2858a6); }
.start { width: 50px; height: 40px; }
.task { width: 62px; height: 40px; }
.open { background: linear-gradient(#506fad, #5271b0) 3px 2px / 56px 36px no-repeat, linear-gradient(#91a4ce, #91a4ce) 2px 1px / 58px 38px no-repeat, #213f7c; }
.tray { display: flex; margin-left: auto; color: #fff; font-size: 12px; }
.up { width: 8px; height: 5px; margin: 18px 12px 0 0; }
.flag { width: 16px; height: 16px; margin: 13px 8px 0 0; }
.net { width: 16px; height: 16px; margin: 13px 12px 0 0; }
.stack { display: flex; flex-direction: column; align-items: center; line-height: 17px; padding-top: 4px; letter-spacing: -0.3px; white-space: nowrap; }
.lang { width: 28px; }
.clock { width: 60px; margin: 0 13px 0 9px; }
</style>
